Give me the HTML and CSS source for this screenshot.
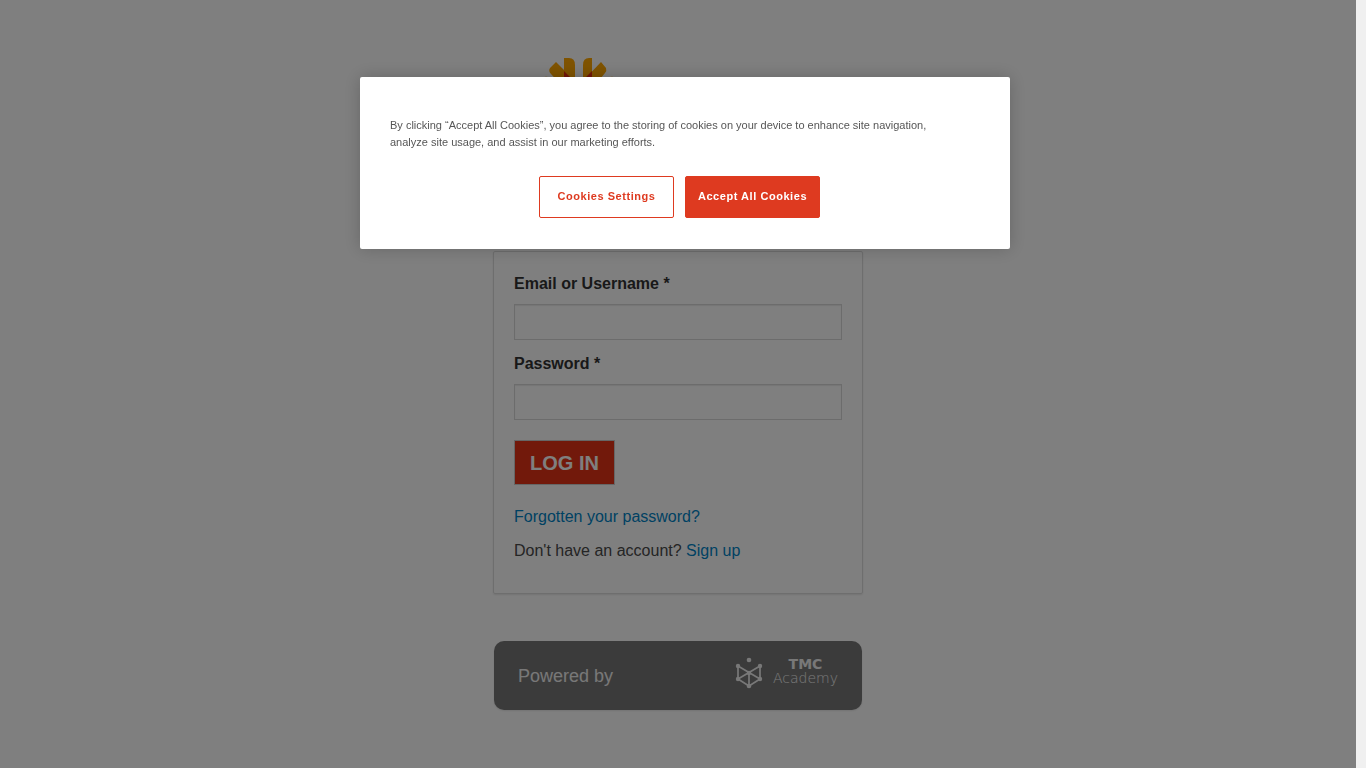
FILE: index.html
```
<!DOCTYPE html>
<html lang="en">
<head>
<meta charset="utf-8">
<meta name="viewport" content="width=device-width, initial-scale=1">
<title>Log in</title>
<link rel="stylesheet" href="styles.css">
</head>
<body>
<div class="page">
  <main class="content">
    <div class="brand">
      <svg width="96" height="96" viewBox="0 0 96 96" aria-hidden="true">
        <g fill="#ffa700">
          <path d="M24 1h5q6 0 6 7v35L24 32z"/>
          <path d="M52 1h-3q-6 0-6 7v35l9-11z"/>
          <path d="M16 5l-6 6q-2 3 1 6l24 26V24z"/>
          <path d="M61 5l5 6q1 3-1 5L43 43V24z"/>
          <path d="M0 23q3-4 8-3l24 23H10z"/>
          <path d="M78 23q-3-4-8-3L44 43h22z"/>
        </g>
        <path fill="#e52c12" d="M24 14l11 11v20L24 34zM52 14L43 23v22l9-11z"/>
      </svg>
    </div>
    <form class="card">
      <label class="label" for="user">Email or Username *</label>
      <input class="field" id="user" type="text">
      <label class="label" for="pass">Password *</label>
      <input class="field" id="pass" type="password">
      <button class="login" type="submit">LOG IN</button>
      <p class="note"><a href="#">Forgotten your password?</a></p>
      <p class="note">Don't have an account? <a href="#">Sign up</a></p>
    </form>
    <footer class="powered">
      <span>Powered by</span>
      <div class="academy">
        <svg width="28" height="32" viewBox="0 0 28 32" fill="none" stroke="#f0f0f0" stroke-width="1.7" aria-hidden="true">
          <path d="M3 9v13l11 7 11-7V9L3 22M3 9l22 13M14 16v13"/>
          <g fill="#f0f0f0" stroke="none">
            <circle cx="14" cy="3" r="2.3"/><circle cx="3" cy="9" r="2.2"/><circle cx="25" cy="9" r="2.2"/>
            <circle cx="3" cy="22" r="2.2"/><circle cx="25" cy="22" r="2.2"/><circle cx="14" cy="16" r="2.2"/><circle cx="14" cy="29" r="2.3"/>
          </g>
        </svg>
        <div class="academy-name"><strong>TMC</strong><span>Academy</span></div>
      </div>
    </footer>
  </main>
  <div class="gutter"></div>
</div>
<div class="overlay">
  <section class="consent" role="dialog" aria-label="Cookie consent">
    <p class="consent-text">By clicking “Accept All Cookies”, you agree to the storing of cookies on your device to enhance site navigation, analyze site usage, and assist in our marketing efforts.</p>
    <div class="actions">
      <button class="action" type="button">Cookies Settings</button>
      <button class="action action-primary" type="button">Accept All Cookies</button>
    </div>
  </section>
</div>
</body>
</html>
```
FILE: styles.css
```
* { box-sizing: border-box; }
body {
  margin: 0;
  background: #fff;
  color: #4a4a4a;
  font: 16px/24px "Liberation Sans", Arial, sans-serif;
}
a { color: #0083c6; text-decoration: none; }
.page { display: grid; grid-template-columns: 1fr 10px; min-height: 100vh; }
.gutter { background: #f0f0f0; }
.content {
  display: flex;
  flex-direction: column;
  align-items: center;
  padding: 57px 16px;
}
.brand { width: 100%; max-width: 370px; height: 194px; padding-left: 47px; }
.brand svg { display: block; }
.card {
  width: 100%;
  max-width: 370px;
  padding: 20px 20px 30px;
  border: 1px solid #ddd;
  border-radius: 2px;
  box-shadow: 0 1px 2px rgba(0, 0, 0, .1);
}
.label { display: block; margin-bottom: 8px; color: #333; font-weight: bold; }
.field {
  display: block;
  width: 100%;
  height: 36px;
  margin-bottom: 12px;
  padding: 6px 8px;
  border: 1px solid #d8d8d8;
  border-radius: 0;
  background: #fff;
  box-shadow: inset 0 1px 1px rgba(0, 0, 0, .08);
  font: inherit;
}
.login {
  display: block;
  height: 45px;
  margin: 20px 0;
  padding: 0 15px;
  border: 1px solid #ccc;
  background: #e53217;
  color: #fff;
  font: bold 20px/24px "Liberation Sans", Arial, sans-serif;
}
.note { margin: 0 0 10px; }
.note:last-child { margin: 0; }
.powered {
  display: flex;
  align-items: center;
  justify-content: space-between;
  width: 100%;
  max-width: 368px;
  height: 69px;
  margin-top: 47px;
  padding: 0 24px;
  border-radius: 10px;
  background: #777;
  box-shadow: 0 1px 2px rgba(0, 0, 0, .1);
  color: #f0f0f0;
  font-size: 18px;
}
.academy { display: flex; gap: 10px; padding-bottom: 6px; }
.academy-name {
  display: flex;
  flex-direction: column;
  align-items: center;
  font: 200 14px/14px "DejaVu Sans", sans-serif;
}
.academy-name strong { font-size: 14px; font-weight: bold; }
.overlay {
  position: fixed;
  inset: 0 10px 0 0;
  display: flex;
  align-items: flex-start;
  justify-content: center;
  padding: 77px 0 0 14px;
  background: rgba(0, 0, 0, .5);
}
.consent {
  width: 100%;
  max-width: 650px;
  padding: 40px 30px 31px;
  border-radius: 2px;
  background: #fff;
  box-shadow: 0 0 18px rgba(0, 0, 0, .2);
}
.consent-text { max-width: 570px; margin: 0 0 25px; color: #565656; font-size: 11px; line-height: 17px; }
.actions { display: flex; justify-content: center; gap: 11px; padding-right: 11px; }
.action {
  width: 135px;
  height: 42px;
  padding: 0 0 2px;
  border: 1px solid #de3a20;
  border-radius: 2px;
  background: #fff;
  color: #de3a20;
  font: bold 11px/14px "Liberation Sans", Arial, sans-serif;
  letter-spacing: .05em;
}
.action-primary { background: #de3a20; color: #fff; }
```
